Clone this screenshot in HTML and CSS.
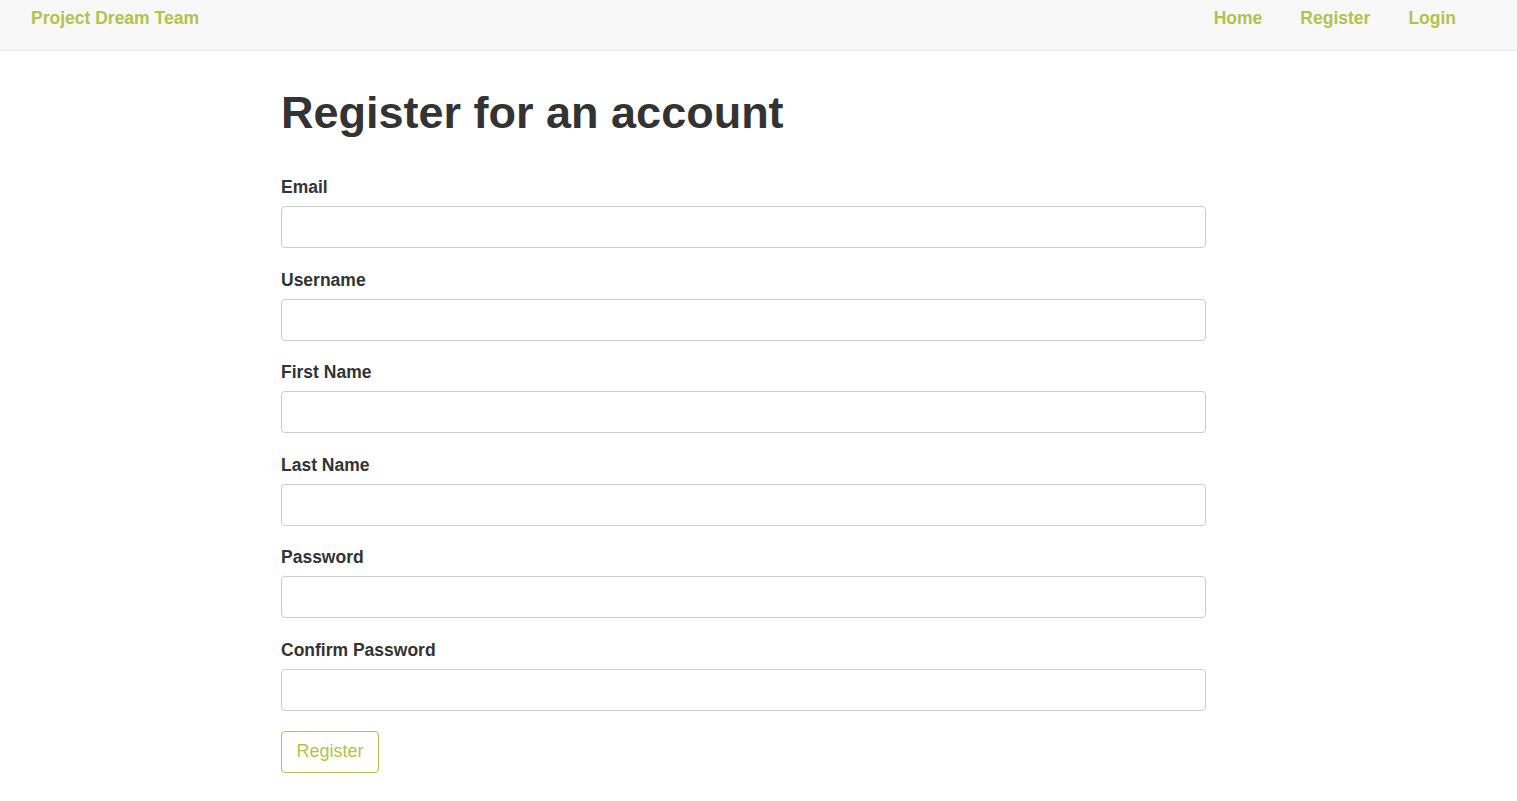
FILE: index.html
```html
<!DOCTYPE html>
<html lang="en">
<head>
    <meta charset="UTF-8">
    <meta name="viewport" content="width=device-width, initial-scale=1.0">
    <title>Register - Project Dream Team</title>
    <link rel="stylesheet" href="styles.css">
</head>
<body>

<nav class="navbar">
    <a class="brand" href="#">Project Dream Team</a>
    <ul class="nav-links">
        <li><a href="#">Home</a></li>
        <li><a href="#">Register</a></li>
        <li><a href="#">Login</a></li>
    </ul>
</nav>

<div class="container">
    <h1>Register for an account</h1>

    <form class="register-form">
        <div class="form-group">
            <label for="email">Email</label>
            <input type="text" id="email">
        </div>
        <div class="form-group">
            <label for="username">Username</label>
            <input type="text" id="username">
        </div>
        <div class="form-group">
            <label for="first_name">First Name</label>
            <input type="text" id="first_name">
        </div>
        <div class="form-group">
            <label for="last_name">Last Name</label>
            <input type="text" id="last_name">
        </div>
        <div class="form-group">
            <label for="password">Password</label>
            <input type="password" id="password">
        </div>
        <div class="form-group">
            <label for="confirm_password">Confirm Password</label>
            <input type="password" id="confirm_password">
        </div>
        <button type="button" class="btn">Register</button>
    </form>
</div>

</body>
</html>
```

FILE: styles.css
```css
body {
    font-family: 'Liberation Sans', Arial, sans-serif;
    margin: 0;
    padding: 0;
    background-color: #fff;
    color: #333;
    font-size: 17.5px;
}
a {
    text-decoration: none;
}
.navbar {
    display: flex;
    justify-content: space-between;
    align-items: flex-start;
    height: 51px;
    background-color: #f8f8f8;
    border-bottom: 1px solid #e7e7e7;
    padding: 0 42px 0 31px;
    box-sizing: border-box;
}
.brand,
.nav-links a {
    color: #b0c34f;
    font-weight: bold;
    font-size: 17.5px;
    line-height: 36px;
}
.nav-links {
    display: flex;
    gap: 38px;
    list-style: none;
    margin: 0;
    padding: 0 19px 0 0;
}
.container {
    width: 925px;
    margin: 0 auto 0 281px;
}
h1 {
    font-size: 45px;
    line-height: 50px;
    margin: 37px 0 37px;
}
.form-group {
    margin-bottom: 19.6px;
}
label {
    display: block;
    font-weight: bold;
    font-size: 17.5px;
    line-height: 24px;
    margin-bottom: 7px;
}
input {
    display: block;
    width: 100%;
    height: 42px;
    box-sizing: border-box;
    border: 1px solid #ccc;
    border-radius: 4px;
    padding: 6px 12px;
    font-size: 17px;
    font-family: inherit;
}
.btn {
    height: 42px;
    width: 98px;
    background: #fff;
    border: 1px solid #b0c34f;
    border-radius: 4px;
    color: #b0c34f;
    font-size: 18px;
    font-family: inherit;
    cursor: pointer;
}
```
